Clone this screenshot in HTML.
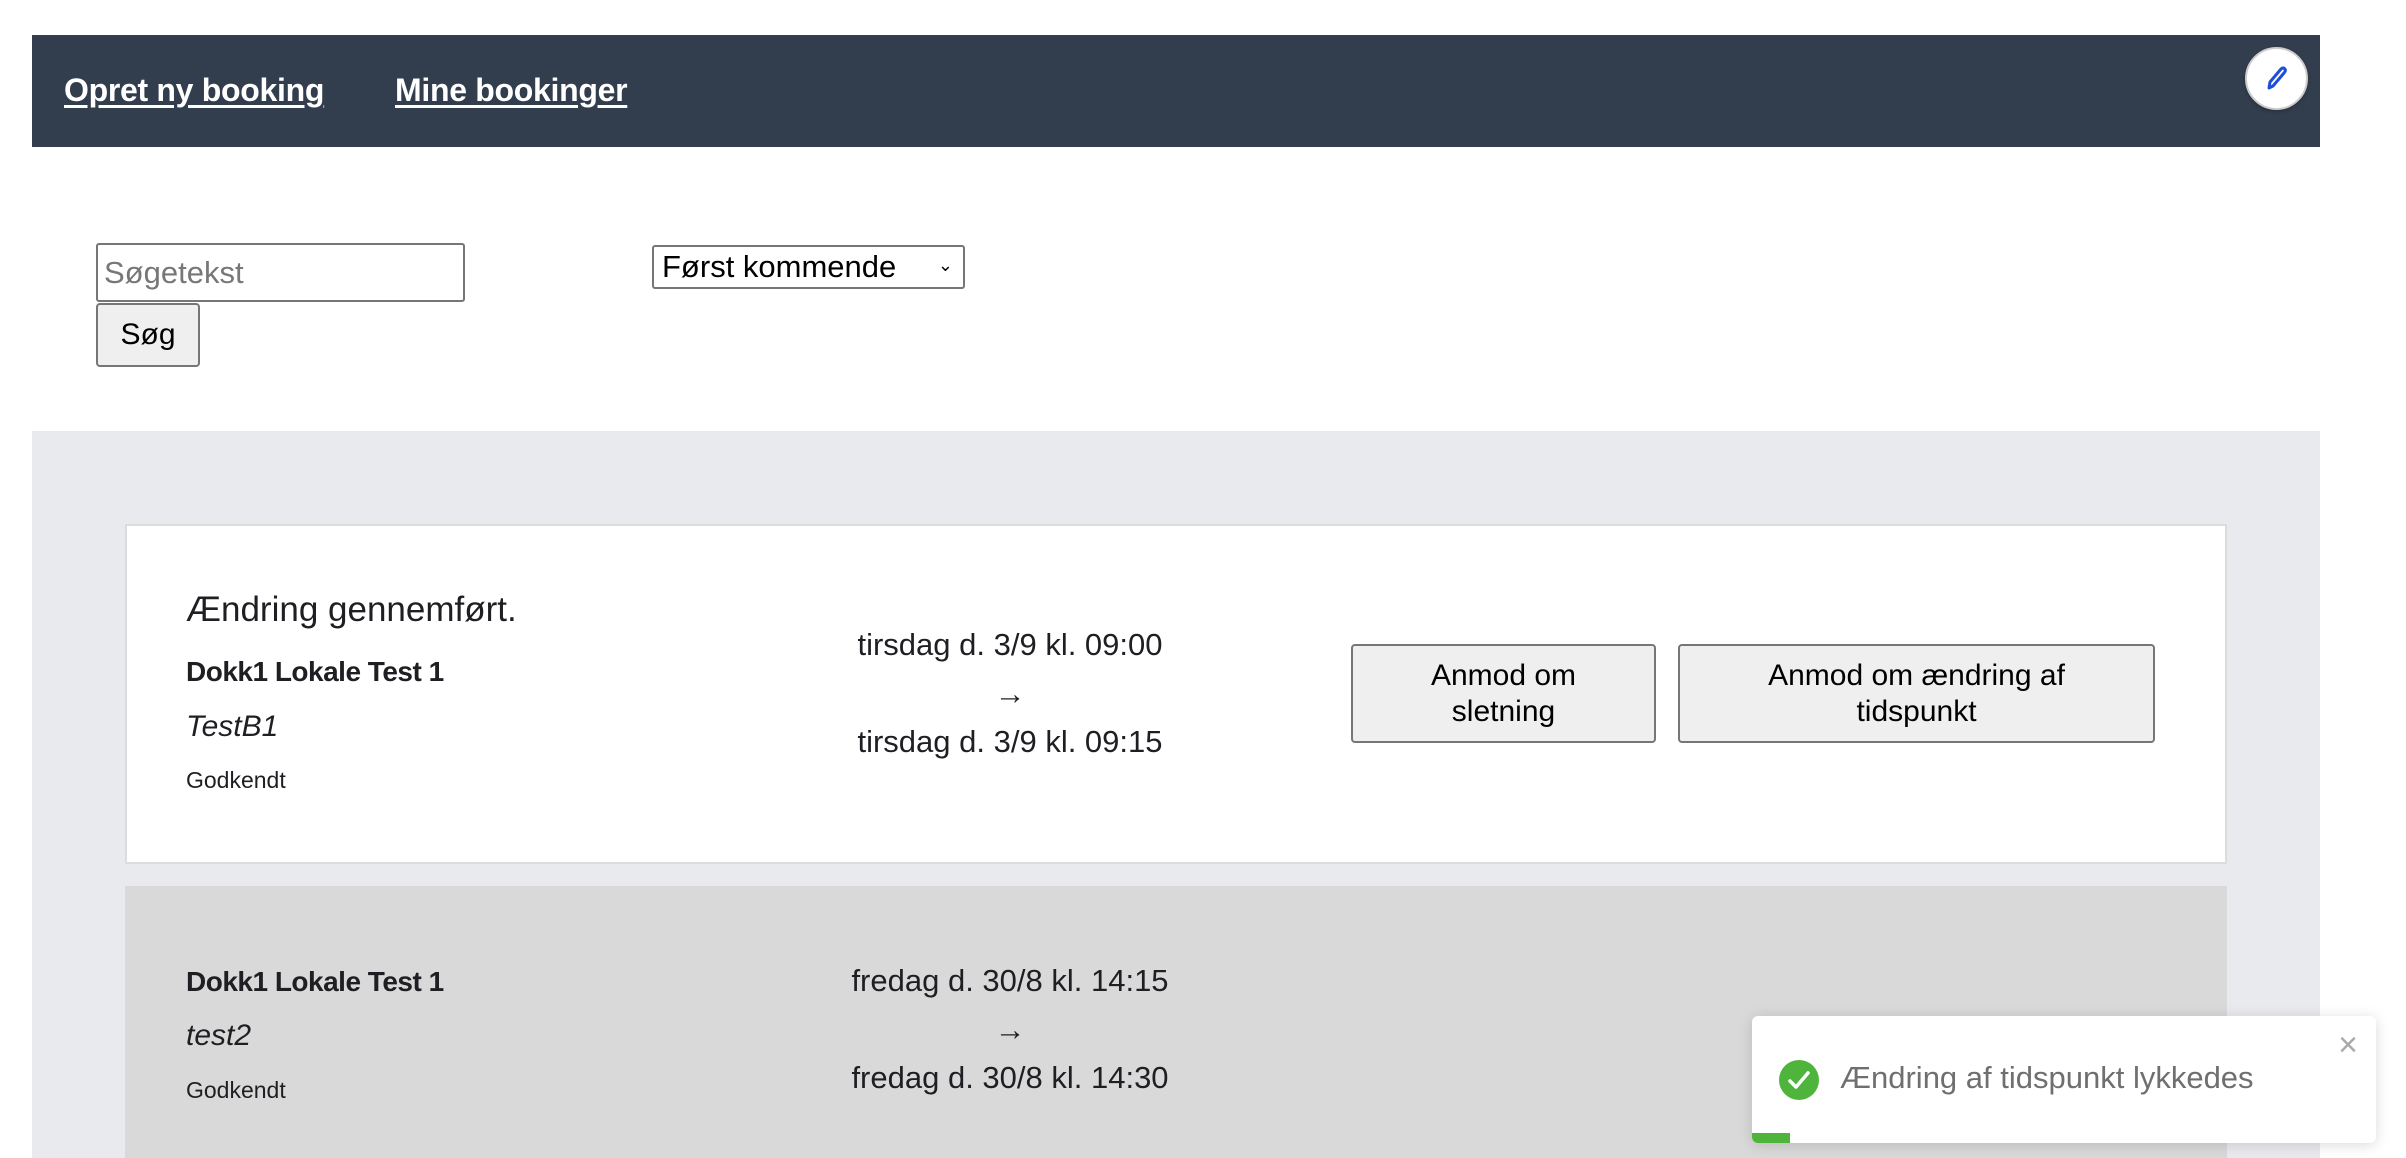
<!DOCTYPE html>
<html style="overflow:hidden;height:1158px"><head><meta charset="utf-8"><style>
*{box-sizing:border-box;margin:0;padding:0}
body{width:2406px;height:1158px;overflow:hidden;background:#fff;position:relative;font-family:"Liberation Sans",sans-serif;color:#1f1f23}
.a{position:absolute}
.hdr{left:32px;top:35px;width:2288px;height:112px;background:#323e4e}
.lnk{color:#fff;font-weight:bold;font-size:32px;text-decoration:underline;text-underline-offset:4px;letter-spacing:-0.3px}
.btn{background:#efefef;border:2px solid #767676;border-radius:4px;font-size:30px;color:#000;text-align:center;display:flex;align-items:center;justify-content:center;line-height:36px}
.gray{left:32px;top:431px;width:2288px;height:727px;background:#e9eaee}
.card{left:125px;width:2102px;border:2px solid #dcdcdc}
.c{text-align:center;width:500px;font-size:31px}
</style></head><body>
<div class="a hdr"></div>
<div class="a lnk" style="left:64px;top:72px">Opret ny booking</div>
<div class="a lnk" style="left:395px;top:72px">Mine bookinger</div>
<div class="a" style="left:2245px;top:47px;width:63px;height:63px;border-radius:50%;background:#fff;border:2px solid #ccc;box-shadow:0 2px 4px rgba(0,0,0,.2)">
<svg width="63" height="63" viewBox="0 0 63 63" style="position:absolute;left:-2px;top:-2px"><path d="M24 41 L25 35 L36 22 Q38 20 40 22 Q41 24 39 26 L28 39 Z" fill="none" stroke="#1d4ed8" stroke-width="3" stroke-linejoin="round"/></svg></div>

<div class="a" style="left:96px;top:243px;width:369px;height:59px;border:2px solid #767676;border-radius:3px;font-size:31px;color:#777;padding:10px 6px">Søgetekst</div>
<div class="a btn" style="left:96px;top:303px;width:104px;height:64px">Søg</div>
<div class="a" style="left:652px;top:245px;width:313px;height:44px;border:2px solid #767676;border-radius:3px;font-size:31px;color:#000;padding:2px 8px;line-height:36px">Først kommende<span style="position:absolute;right:10px;top:0;font-size:18px">&#8964;</span></div>

<div class="a gray"></div>
<div class="a card" style="top:524px;height:340px;background:#fff"></div>
<div class="a" style="left:186px;top:590px;font-size:35px">Ændring gennemført.</div>
<div class="a" style="left:186px;top:656px;font-size:28px;font-weight:bold;letter-spacing:-0.5px">Dokk1 Lokale Test 1</div>
<div class="a" style="left:186px;top:710px;font-size:30px;font-style:italic">TestB1</div>
<div class="a" style="left:186px;top:767px;font-size:23px">Godkendt</div>
<div class="a c" style="left:760px;top:627px">tirsdag d. 3/9 kl. 09:00</div>
<div class="a c" style="left:760px;top:676px">→</div>
<div class="a c" style="left:760px;top:724px">tirsdag d. 3/9 kl. 09:15</div>
<div class="a btn" style="left:1351px;top:644px;width:305px;height:99px">Anmod om<br>sletning</div>
<div class="a btn" style="left:1678px;top:644px;width:477px;height:99px">Anmod om ændring af<br>tidspunkt</div>

<div class="a card" style="top:886px;height:272px;background:#d9d9d9;border-color:#d9d9d9;border-bottom:none"></div>
<div class="a" style="left:186px;top:966px;font-size:28px;font-weight:bold;letter-spacing:-0.5px">Dokk1 Lokale Test 1</div>
<div class="a" style="left:186px;top:1019px;font-size:30px;font-style:italic">test2</div>
<div class="a" style="left:186px;top:1077px;font-size:23px">Godkendt</div>
<div class="a c" style="left:760px;top:963px">fredag d. 30/8 kl. 14:15</div>
<div class="a c" style="left:760px;top:1012px">→</div>
<div class="a c" style="left:760px;top:1060px">fredag d. 30/8 kl. 14:30</div>

<div class="a" style="left:1752px;top:1016px;width:624px;height:127px;background:#fff;border-radius:6px;box-shadow:0 2px 14px rgba(0,0,0,.15);overflow:hidden">
<svg class="a" style="left:26px;top:43px" width="42" height="42" viewBox="0 0 42 42"><circle cx="21" cy="21" r="20" fill="#4eb43c"/><path d="M12 22 L18 28 L30 14" fill="none" stroke="#fff" stroke-width="3.5" stroke-linecap="round" stroke-linejoin="round"/></svg>
<div class="a" style="left:88px;top:44px;font-size:31px;color:#6f6f6f">Ændring af tidspunkt lykkedes</div>
<div class="a" style="right:18px;top:10px;font-size:34px;color:#aaa">×</div>
<div class="a" style="left:0;bottom:0;width:38px;height:10px;background:#4eb43c"></div>
</div>
</body></html>
